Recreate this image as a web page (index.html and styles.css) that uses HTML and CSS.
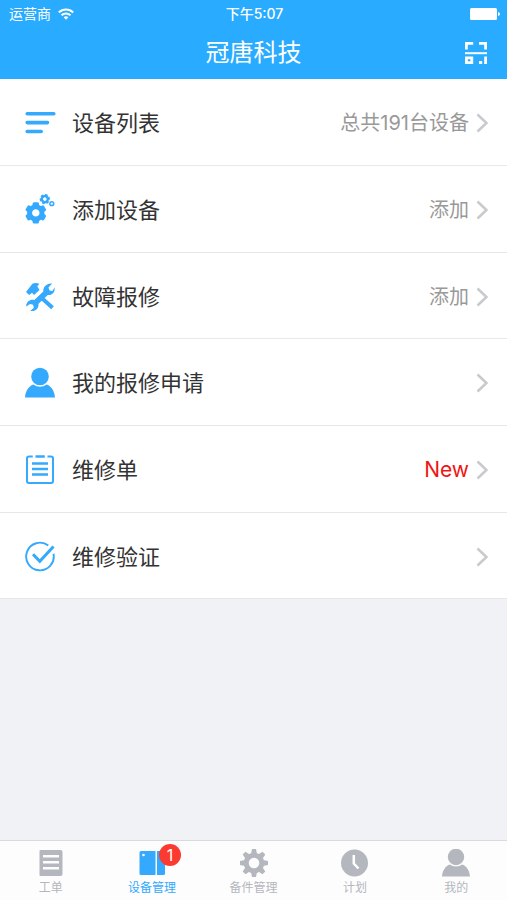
FILE: index.html
```html
<!DOCTYPE html>
<html lang="zh-CN">
<head>
<meta charset="utf-8">
<meta name="viewport" content="width=device-width, initial-scale=1">
<title>冠唐科技</title>
<link rel="stylesheet" href="styles.css">
</head>
<body>
<svg class="defs" aria-hidden="true">
  <symbol id="chevron" viewBox="0 0 12 20"><path d="M1.500 1.500 10.500 10 1.500 18.500" fill="none" stroke="currentColor" stroke-width="2.600"/></symbol>
  <symbol id="person" viewBox="0 0 32 32"><circle cx="16" cy="9.500" r="8.800"/><path d="M1 30.500C1.500 24 4.500 19.500 9.200 17.600Q16 22 22.800 17.600C27.500 19.500 30.500 24 31 30.500Z"/></symbol>
</svg>

<header class="header">
  <div class="status">
    <div class="carrier">
      <span>运营商</span>
      <svg class="wifi" viewBox="0 0 16 12"><g fill="none" stroke="#fff" stroke-width="1.900"><path d="M.8 4.500a10.300 10.300 0 0 1 14.400 0"/><path d="M3.500 7.300a6.400 6.400 0 0 1 9 0"/></g><path d="M5.600 9.300a3.500 3.500 0 0 1 4.800 0L8 11.800Z" fill="#fff"/></svg>
    </div>
    <time class="clock">下午5:07</time>
    <svg class="battery" viewBox="0 0 30 12"><rect width="27" height="12" rx="1.500" fill="#fff"/><path d="M28 4q2 .5 2 2t-2 2Z" fill="#fff"/></svg>
  </div>
  <div class="nav">
    <h1>冠唐科技</h1>
    <button class="scan" type="button" aria-label="扫一扫">
      <svg viewBox="0 0 24 24"><g fill="none" stroke="#fff" stroke-width="2.800"><path d="M2.400 8.500V2.400h6.800M15 2.400h6.600v6.100"/><path d="M1 12.200h22" stroke-width="2"/><path d="M2.400 16.800h5.400v4.800H2.400Z"/></g><path d="M20.200 15.500H23V23h-2.800zM15 20h3.200v3H15z" fill="#fff"/></svg>
    </button>
  </div>
</header>

<main>
  <ul class="list">
    <li><a class="row" href="#devices">
      <svg class="icon" viewBox="0 0 32 32"><path d="M3.200 6.800h26.600M3.200 15.600h20.300M3.200 24.500h14" fill="none" stroke="currentColor" stroke-width="3.600" stroke-linecap="round"/></svg>
      <span class="label">设备列表</span><span class="note">总共191台设备</span><svg class="chevron"><use href="#chevron"/></svg>
    </a></li>
    <li><a class="row" href="#add">
      <svg class="icon" viewBox="0 0 32 32">
        <defs>
          <g id="cog6">
            <circle r="6.200" fill="none" stroke="currentColor" stroke-width="5"/>
            <g id="cog6-pair"><rect x="-3.200" y="-10.600" width="6.400" height="4.700" rx="1.500"/><rect x="-3.200" y="5.900" width="6.400" height="4.700" rx="1.500"/></g>
            <use href="#cog6-pair" transform="rotate(60)"/><use href="#cog6-pair" transform="rotate(120)"/>
          </g>
        </defs>
        <use href="#cog6" transform="translate(11.800 18.900)"/>
        <use href="#cog6" transform="translate(20.800 5.100) rotate(20) scale(.48)"/>
        <circle cx="27.800" cy="9.700" r="1.900" fill="none" stroke="currentColor" stroke-width="1.500"/>
      </svg>
      <span class="label">添加设备</span><span class="note">添加</span><svg class="chevron"><use href="#chevron"/></svg>
    </a></li>
    <li><a class="row" href="#fault">
      <svg class="icon" viewBox="0 0 32 32"><path d="M2 11 8.200 3Q11 1.200 15.400 2.800L13.300 5.200 15.500 9 10 13.900 8 11.700 5.200 14Z"/><path d="m18 17.300 10.500 9.400" fill="none" stroke="currentColor" stroke-width="4"/><path d="M28.200 2.600 24.500 6.500l1 2.900 2.900.5 2.200-3.500c.7 4.800-2.500 8-6.800 7.500L14.500 22.700c.4 4.900-3.300 8.300-8.300 7.200l3.600-3.100-.7-3-3-.9-4 2.600c.1-4.700 4-7.400 8.200-6.500L19.300 10.600c-.4-4.900 3.700-8.900 8.900-8Z"/></svg>
      <span class="label">故障报修</span><span class="note">添加</span><svg class="chevron"><use href="#chevron"/></svg>
    </a></li>
    <li><a class="row" href="#requests">
      <svg class="icon"><use href="#person"/></svg>
      <span class="label">我的报修申请</span><svg class="chevron"><use href="#chevron"/></svg>
    </a></li>
    <li><a class="row" href="#orders">
      <svg class="icon" viewBox="0 0 32 32"><g fill="none" stroke="currentColor"><path d="M8.800 2.500H5Q3 2.500 3 4.500V27q0 2 2 2h22q2 0 2-2V4.500q0-2-2-2h-3.500" stroke-width="2"/><path d="M11.500 2.500h9.300M8 9.500h16M8 15h16M8 20.500h16" stroke-width="2.600"/></g></svg>
      <span class="label">维修单</span><span class="note new">New</span><svg class="chevron"><use href="#chevron"/></svg>
    </a></li>
    <li><a class="row" href="#verify">
      <svg class="icon" viewBox="0 0 32 32"><g fill="none" stroke="currentColor"><path d="M24.300 4.500A13.800 13.800 0 1 0 29.500 12.700" stroke-width="1.900"/><path d="m9 13.300 6.800 7L29.500 5.500" stroke-width="3"/></g></svg>
      <span class="label">维修验证</span><svg class="chevron"><use href="#chevron"/></svg>
    </a></li>
  </ul>
</main>

<nav class="tabs">
  <a class="tab" href="#work">
    <span class="tab-icon"><svg viewBox="0 0 28 28"><path fill-rule="evenodd" d="M3.500 1h20q2 0 2 2v22q0 2-2 2h-20q-1 0-1-1V2q0-1 1-1ZM6 6v2.600h16V6ZM6 12v2.600h16V12ZM6 18v2.600h16V18Z"/></svg></span>
    <span>工单</span>
  </a>
  <a class="tab active" href="#manage" aria-current="page">
    <span class="tab-icon"><svg viewBox="0 0 28 28"><path d="M3 2h14.500v24H3q-1.500 0-1.500-1.500v-21Q1.500 2 3 2ZM19 2h6.500q1.500 0 1.500 1.500v21q0 1.500-1.500 1.500H19Z"/><circle cx="5.500" cy="6" r="1.300" fill="#fff"/></svg><span class="badge">1</span></span>
    <span>设备管理</span>
  </a>
  <a class="tab" href="#parts">
    <span class="tab-icon"><svg viewBox="-14 -14 28 28">
      <circle r="7.800" fill="none" stroke="currentColor" stroke-width="5"/>
      <g id="teeth"><path d="M-3-9-2-14H2L3-9ZM-3 9-2 14H2L3 9Z"/></g>
      <use href="#teeth" transform="rotate(45)"/><use href="#teeth" transform="rotate(90)"/><use href="#teeth" transform="rotate(135)"/>
    </svg></span>
    <span>备件管理</span>
  </a>
  <a class="tab" href="#plan">
    <span class="tab-icon"><svg viewBox="0 0 28 28"><circle cx="13.500" cy="14" r="13.500"/><path d="M12.800 6v8.500l4.700 5" fill="none" stroke="#fff" stroke-width="2.500"/></svg></span>
    <span>计划</span>
  </a>
  <a class="tab" href="#me">
    <span class="tab-icon"><svg viewBox="1 1 30 30"><use href="#person" width="32" height="32"/></svg></span>
    <span>我的</span>
  </a>
</nav>
</body>
</html>
```

FILE: styles.css
```css
* {
  box-sizing: border-box;
}

body {
  margin: 0;
  min-height: 100vh;
  display: flex;
  flex-direction: column;
  background: #f0f2f6;
  color: #333;
  font-family: Inter, "Noto Sans CJK SC", sans-serif;
}

svg {
  display: block;
  fill: currentColor;
}

a {
  color: inherit;
  text-decoration: none;
}

.defs {
  position: absolute;
  width: 0;
  height: 0;
}

.header {
  background: #29abff;
  color: #fff;
}

.status {
  display: grid;
  grid-template-columns: 1fr auto 1fr;
  align-items: center;
  height: 27px;
  padding: 0 7px 0 9px;
  font-size: 14px;
  line-height: 20px;
}

.carrier {
  display: flex;
  align-items: center;
  gap: 7px;
}

.wifi {
  width: 16px;
  height: 12px;
}

.clock {
  font-weight: 500;
}

.battery {
  width: 30px;
  height: 12px;
  justify-self: end;
}

.nav {
  display: grid;
  grid-template-columns: 1fr auto 1fr;
  align-items: center;
  height: 52px;
  padding: 0 19px;
}

h1 {
  grid-column: 2;
  margin: 0;
  font-size: 24px;
  font-weight: 400;
  line-height: 32px;
}

.scan {
  justify-self: end;
  padding: 0;
  border: 0;
  background: none;
}

.scan svg {
  width: 24px;
  height: 24px;
}

main {
  flex: 1;
}

.list {
  margin: 0;
  padding: 0;
  list-style: none;
  background: #fff;
}

.row {
  display: flex;
  align-items: center;
  height: 87px;
  padding: 2px 19px 0 24px;
  border-bottom: 1px solid #e6e7e9;
}

li:nth-child(3n) .row {
  height: 86px;
}

.icon {
  width: 32px;
  height: 32px;
  margin-right: 16px;
  color: #34a9fd;
}

.label {
  flex: 1;
  font-size: 22px;
  line-height: 32px;
}

.note {
  color: #999;
  font-size: 20px;
  line-height: 32px;
}

.new {
  color: #f01414;
  font-size: 21px;
}

.chevron {
  width: 12px;
  height: 20px;
  margin-left: 7px;
  color: #c9cacd;
}

.tabs {
  display: flex;
  height: 60px;
  background: #fdfdfd;
  border-top: 1px solid #d9dade;
}

.tab {
  flex: 1;
  display: flex;
  flex-direction: column;
  align-items: center;
  gap: 3px;
  padding-top: 8px;
  color: #b4b7be;
  font-size: 12px;
  line-height: 16px;
}

.active {
  color: #34a9fd;
}

.tab-icon {
  position: relative;
}

.tab-icon svg {
  width: 28px;
  height: 28px;
}

.badge {
  position: absolute;
  top: -5px;
  left: 21px;
  width: 22px;
  height: 22px;
  border-radius: 50%;
  background: #fb3a30;
  color: #fff;
  font-size: 16px;
  line-height: 22px;
  text-align: center;
}
```
